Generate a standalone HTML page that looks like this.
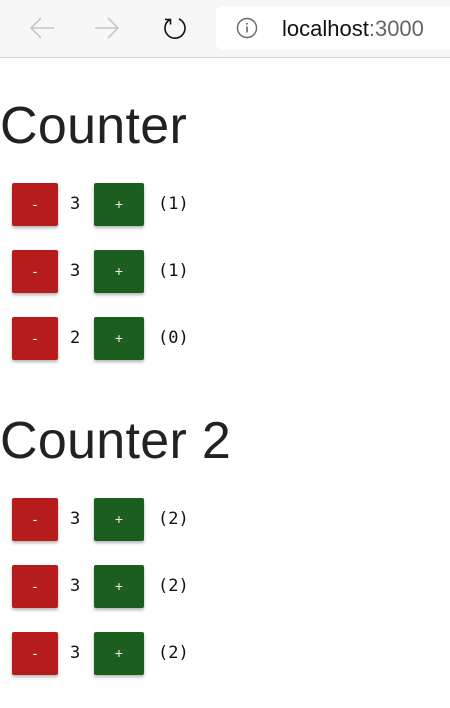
<!DOCTYPE html>
<html><head><style>
body{margin:0;width:450px;height:708px;overflow:hidden;background:#fff;font-family:"Liberation Sans",sans-serif;position:relative}
.bar{position:absolute;left:0;top:0;width:450px;height:57px;background:#f7f7f7;border-bottom:1px solid #d4d4d4}
.url{position:absolute;left:216px;top:6px;width:250px;height:44px;background:#fff;border-radius:7px}
.url span{position:absolute;left:66px;top:10px;font-size:22px;color:#111}
.url span b{font-weight:normal;color:#666}
h1{position:absolute;left:0;margin:0;font-weight:normal;font-size:52px;color:#222;line-height:1;letter-spacing:0.3px}
.row{position:absolute;left:12px;height:43px;width:300px}
.btn{position:absolute;top:0;height:43px;border-radius:2px;box-shadow:0 2px 3px rgba(0,0,0,.3);color:#fff;font-size:14px;text-align:center;line-height:43px}
.m{left:0;width:46px;background:#b71c1c}
.p{left:82px;width:50px;background:#1b5e20}
.n{position:absolute;left:58px;top:11px;font-family:"DejaVu Sans Mono","Liberation Mono",monospace;font-size:17px;color:#111}
.c{position:absolute;left:146px;top:11px;font-family:"DejaVu Sans Mono","Liberation Mono",monospace;font-size:17px;color:#111}
</style></head><body>
<div class="bar">
<svg style="position:absolute;left:28px;top:16px" width="28" height="24" viewBox="0 0 28 24"><path d="M26 12H3M13 2L3 12l10 10" fill="none" stroke="#c8c8c8" stroke-width="1.6"/></svg>
<svg style="position:absolute;left:93px;top:16px" width="28" height="24" viewBox="0 0 28 24"><path d="M2 12h23M15 2l10 10-10 10" fill="none" stroke="#c8c8c8" stroke-width="1.6"/></svg>
<svg style="position:absolute;left:160px;top:14px" width="28" height="28" viewBox="0 0 28 28"><path d="M10 5.5A10 10 0 1 0 19 5" fill="none" stroke="#111" stroke-width="1.6"/><path d="M5 5.5h5.5v5" fill="none" stroke="#111" stroke-width="1.6"/></svg>
<div class="url">
<svg style="position:absolute;left:20px;top:11px" width="22" height="22" viewBox="0 0 22 22"><circle cx="11" cy="11" r="9.5" fill="none" stroke="#666" stroke-width="1.4"/><path d="M11 9.5v6" stroke="#666" stroke-width="1.6"/><circle cx="11" cy="6.7" r="1" fill="#666"/></svg>
<span>localhost<b>:3000</b></span></div>
</div>
<h1 style="top:100px">Counter</h1>
<div class="row" style="top:183px"><div class="btn m">-</div><div class="n">3</div><div class="btn p">+</div><div class="c">(1)</div></div>
<div class="row" style="top:250px"><div class="btn m">-</div><div class="n">3</div><div class="btn p">+</div><div class="c">(1)</div></div>
<div class="row" style="top:317px"><div class="btn m">-</div><div class="n">2</div><div class="btn p">+</div><div class="c">(0)</div></div>
<h1 style="top:415px">Counter 2</h1>
<div class="row" style="top:498px"><div class="btn m">-</div><div class="n">3</div><div class="btn p">+</div><div class="c">(2)</div></div>
<div class="row" style="top:565px"><div class="btn m">-</div><div class="n">3</div><div class="btn p">+</div><div class="c">(2)</div></div>
<div class="row" style="top:632px"><div class="btn m">-</div><div class="n">3</div><div class="btn p">+</div><div class="c">(2)</div></div>
</body></html>
